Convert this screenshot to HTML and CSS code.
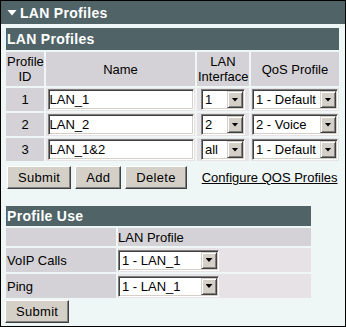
FILE: index.html
```html
<!DOCTYPE html>
<html lang="en">
<head>
    <title>LAN Profiles</title>
    <link rel="stylesheet" href="styles.css">
</head>
<body>
<div class="page-title">
    <span class="caret"></span>
    LAN Profiles
</div>

<div class="content">
    <table class="grid profiles">
        <colgroup>
            <col class="c-id">
            <col class="c-name">
            <col class="c-lan">
            <col class="c-qos">
        </colgroup>
        <tr>
            <th class="section-title" colspan="4">LAN Profiles</th>
        </tr>
        <tr class="col-head">
            <th>Profile<br>ID</th>
            <th>Name</th>
            <th>LAN<br>Interface</th>
            <th>QoS Profile</th>
        </tr>
        <tr class="row">
            <td class="id">1</td>
            <td class="field"><input class="text" type="text" value="LAN_1"></td>
            <td class="field"><div class="select sel-lan"><span class="select-value">1</span><span class="select-arrow"></span></div></td>
            <td class="field"><div class="select sel-qos"><span class="select-value">1 - Default</span><span class="select-arrow"></span></div></td>
        </tr>
        <tr class="row">
            <td class="id">2</td>
            <td class="field"><input class="text" type="text" value="LAN_2"></td>
            <td class="field"><div class="select sel-lan"><span class="select-value">2</span><span class="select-arrow"></span></div></td>
            <td class="field"><div class="select sel-qos"><span class="select-value">2 - Voice</span><span class="select-arrow"></span></div></td>
        </tr>
        <tr class="row">
            <td class="id">3</td>
            <td class="field"><input class="text" type="text" value="LAN_1&amp;2"></td>
            <td class="field"><div class="select sel-lan"><span class="select-value">all</span><span class="select-arrow"></span></div></td>
            <td class="field"><div class="select sel-qos"><span class="select-value">1 - Default</span><span class="select-arrow"></span></div></td>
        </tr>
    </table>

    <div class="actions">
        <button class="btn">Submit</button>
        <button class="btn">Add</button>
        <button class="btn">Delete</button>
        <a class="link" href="#">Configure QOS Profiles</a>
    </div>

    <table class="grid usage">
        <colgroup>
            <col class="c-label">
            <col class="c-profile">
        </colgroup>
        <tr>
            <th class="section-title usage-title" colspan="2">Profile Use</th>
        </tr>
        <tr class="usage-head">
            <th></th>
            <th class="left">LAN Profile</th>
        </tr>
        <tr class="usage-row">
            <td class="label">VoIP Calls</td>
            <td class="field left"><div class="select sel-use"><span class="select-value">1 - LAN_1</span><span class="select-arrow"></span></div></td>
        </tr>
        <tr class="usage-row">
            <td class="label">Ping</td>
            <td class="field left"><div class="select sel-use"><span class="select-value">1 - LAN_1</span><span class="select-arrow"></span></div></td>
        </tr>
    </table>

    <button class="btn btn-last">Submit</button>
</div>
</body>
</html>
```

FILE: styles.css
```css
:root {
    --bar: #506468;
    --bg: #eef6f6;
    --cell-head: #d4d2d6;
    --cell-body: #e6e2e6;
    --face: #d4d0c8;
    --shadow: #808080;
    --dark: #404040;
}

* {
    box-sizing: border-box;
}

body {
    margin: 0;
    width: 346px;
    height: 327px;
    border: 1px solid #000;
    background: var(--bg);
    font-family: "Liberation Sans", Arial, sans-serif;
    font-size: 13px;
    color: #000;
    overflow: hidden;
}

.page-title {
    display: flex;
    align-items: center;
    gap: 3px;
    height: 23px;
    padding-left: 6px;
    background: var(--bar);
    color: #fff;
    font-size: 14px;
    font-weight: bold;
    letter-spacing: 0.3px;
}

.caret {
    width: 10px;
    height: 6px;
    background: #fff;
    clip-path: polygon(0 0, 100% 0, 50% 100%);
}

.content {
    padding: 2px 3px 0;
}

.grid {
    border-spacing: 2px;
    table-layout: fixed;
}

.grid th,
.grid td {
    padding: 0 1px;
}

.profiles {
    width: 337px;
}

.c-id { width: 38px; }
.c-name { width: 149px; }
.c-lan { width: 52px; }
.c-qos { width: 88px; }

.section-title {
    height: 22px;
    background: var(--bar);
    color: #fff;
    font-size: 14px;
    font-weight: bold;
    text-align: left;
    letter-spacing: 0.3px;
}

.col-head th {
    height: 34px;
    background: var(--cell-head);
    font-weight: normal;
    line-height: 15px;
}

.row td {
    height: 23px;
}

td.id {
    background: var(--cell-head);
    text-align: center;
}

td.field {
    background: var(--cell-body);
    text-align: center;
}

.text {
    width: 146px;
    height: 21px;
    padding: 0 1px;
    vertical-align: middle;
    font-family: inherit;
    font-size: 13px;
    color: #000;
    background: #fff;
    border: 1px solid;
    border-color: var(--shadow) #fff #fff var(--shadow);
    box-shadow: inset 1px 1px var(--dark), inset -1px -1px var(--face);
    outline: none;
}

.select {
    display: inline-flex;
    height: 21px;
    padding: 1px;
    vertical-align: middle;
    background: #fff;
    border: 1px solid;
    border-color: var(--shadow) #fff #fff var(--shadow);
    box-shadow: inset 1px 1px var(--dark), inset -1px -1px var(--face);
    text-align: left;
}

.sel-lan { width: 44px; }
.sel-qos { width: 86px; }
.sel-use { width: 101px; }

.select-value {
    flex: 1;
    padding-left: 2px;
    line-height: 17px;
    white-space: nowrap;
    overflow: hidden;
}

.select-arrow {
    display: flex;
    align-items: center;
    justify-content: center;
    width: 16px;
    background: var(--face);
    border: 1px solid;
    border-color: var(--face) var(--dark) var(--dark) var(--face);
    box-shadow: inset 1px 1px #fff, inset -1px -1px var(--shadow);
}

.select-arrow::before {
    content: "";
    width: 7px;
    height: 4px;
    background: #000;
    clip-path: polygon(0 0, 100% 0, 50% 100%);
}

.actions {
    display: flex;
    align-items: center;
    gap: 4px;
    margin-top: 3px;
    padding-left: 3px;
}

.btn {
    height: 23px;
    padding: 0 10px;
    font-family: inherit;
    font-size: 13px;
    letter-spacing: 0.3px;
    color: #000;
    background: var(--face);
    border: 1px solid;
    border-color: #fff var(--dark) var(--dark) #fff;
    box-shadow: inset -1px -1px var(--shadow);
}

.link {
    margin-left: 11px;
    color: #000;
}

.usage {
    width: 309px;
    margin-top: 15px;
}

.c-label { width: 110px; }
.c-profile { width: 193px; }

.usage-title {
    height: 20px;
}

.usage-head th {
    height: 18px;
    background: var(--cell-head);
    font-weight: normal;
}

.usage-row td {
    height: 24px;
}

td.label {
    background: var(--cell-head);
}

.grid .left {
    padding-left: 0;
    text-align: left;
}

.btn-last {
    margin-left: 1px;
}
```
